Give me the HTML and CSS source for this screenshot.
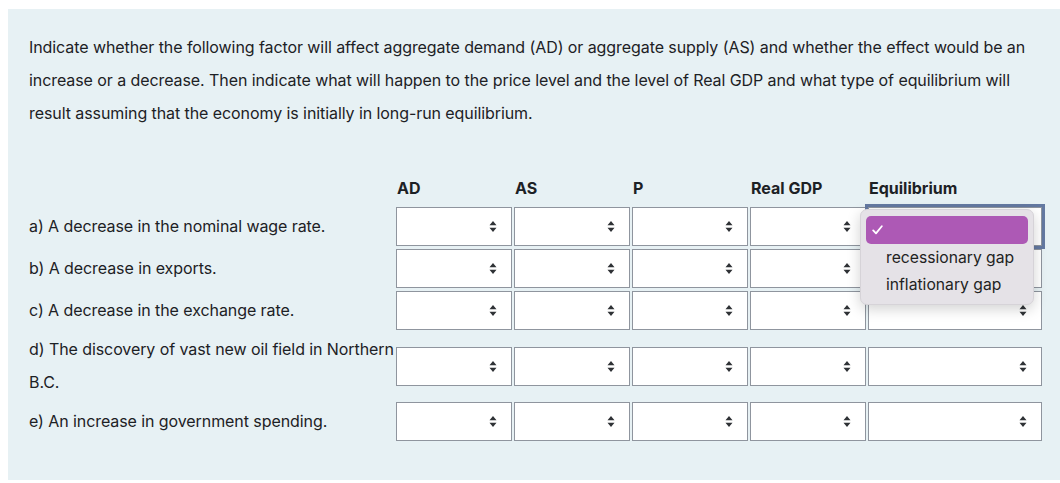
FILE: index.html
```html
<!DOCTYPE html>
<html lang="en">
<head>
<meta charset="utf-8">
<title>Question</title>
<link rel="stylesheet" href="styles.css">
</head>
<body>
<div class="panel">
  <p class="qtext">Indicate whether the following factor will affect aggregate demand (AD) or aggregate supply (AS) and whether the effect would be an increase or a decrease. Then indicate what will happen to the price level and the level of Real GDP and what type of equilibrium will result assuming that the economy is initially in long-run equilibrium.</p>
  <table class="grid">
    <thead>
      <tr>
        <th class="lab"></th>
        <th>AD</th>
        <th>AS</th>
        <th>P</th>
        <th>Real GDP</th>
        <th>Equilibrium</th>
      </tr>
    </thead>
    <tbody>
      <tr>
        <td class="lab">a) A decrease in the nominal wage rate.</td>
        <td><div class="sel"><svg class="arr" width="8" height="11" viewBox="0 0 8 11"><path d="M4 0L7.5 4.3H0.5Z M0.5 6.7H7.5L4 11Z"/></svg></div></td>
        <td><div class="sel"><svg class="arr" width="8" height="11" viewBox="0 0 8 11"><path d="M4 0L7.5 4.3H0.5Z M0.5 6.7H7.5L4 11Z"/></svg></div></td>
        <td><div class="sel"><svg class="arr" width="8" height="11" viewBox="0 0 8 11"><path d="M4 0L7.5 4.3H0.5Z M0.5 6.7H7.5L4 11Z"/></svg></div></td>
        <td><div class="sel"><svg class="arr" width="8" height="11" viewBox="0 0 8 11"><path d="M4 0L7.5 4.3H0.5Z M0.5 6.7H7.5L4 11Z"/></svg></div></td>
        <td class="eqcell">
          <div class="sel wide focus"><svg class="arr" width="8" height="11" viewBox="0 0 8 11"><path d="M4 0L7.5 4.3H0.5Z M0.5 6.7H7.5L4 11Z"/></svg></div>
          <div class="menu">
            <div class="opt on"><svg class="check" width="11" height="10" viewBox="0 0 11 10"><path d="M1.2 5.4L4 8.4L9.8 1.2" fill="none" stroke="#ffffff" stroke-width="1.8" stroke-linecap="round" stroke-linejoin="round"/></svg></div>
            <div class="opt">recessionary gap</div>
            <div class="opt">inflationary gap</div>
          </div>
        </td>
      </tr>
      <tr>
        <td class="lab">b) A decrease in exports.</td>
        <td><div class="sel"><svg class="arr" width="8" height="11" viewBox="0 0 8 11"><path d="M4 0L7.5 4.3H0.5Z M0.5 6.7H7.5L4 11Z"/></svg></div></td>
        <td><div class="sel"><svg class="arr" width="8" height="11" viewBox="0 0 8 11"><path d="M4 0L7.5 4.3H0.5Z M0.5 6.7H7.5L4 11Z"/></svg></div></td>
        <td><div class="sel"><svg class="arr" width="8" height="11" viewBox="0 0 8 11"><path d="M4 0L7.5 4.3H0.5Z M0.5 6.7H7.5L4 11Z"/></svg></div></td>
        <td><div class="sel"><svg class="arr" width="8" height="11" viewBox="0 0 8 11"><path d="M4 0L7.5 4.3H0.5Z M0.5 6.7H7.5L4 11Z"/></svg></div></td>
        <td><div class="sel wide"><svg class="arr" width="8" height="11" viewBox="0 0 8 11"><path d="M4 0L7.5 4.3H0.5Z M0.5 6.7H7.5L4 11Z"/></svg></div></td>
      </tr>
      <tr>
        <td class="lab">c) A decrease in the exchange rate.</td>
        <td><div class="sel"><svg class="arr" width="8" height="11" viewBox="0 0 8 11"><path d="M4 0L7.5 4.3H0.5Z M0.5 6.7H7.5L4 11Z"/></svg></div></td>
        <td><div class="sel"><svg class="arr" width="8" height="11" viewBox="0 0 8 11"><path d="M4 0L7.5 4.3H0.5Z M0.5 6.7H7.5L4 11Z"/></svg></div></td>
        <td><div class="sel"><svg class="arr" width="8" height="11" viewBox="0 0 8 11"><path d="M4 0L7.5 4.3H0.5Z M0.5 6.7H7.5L4 11Z"/></svg></div></td>
        <td><div class="sel"><svg class="arr" width="8" height="11" viewBox="0 0 8 11"><path d="M4 0L7.5 4.3H0.5Z M0.5 6.7H7.5L4 11Z"/></svg></div></td>
        <td><div class="sel wide"><svg class="arr" width="8" height="11" viewBox="0 0 8 11"><path d="M4 0L7.5 4.3H0.5Z M0.5 6.7H7.5L4 11Z"/></svg></div></td>
      </tr>
      <tr>
        <td class="lab">d) The discovery of vast new oil field in Northern<br>B.C.</td>
        <td><div class="sel"><svg class="arr" width="8" height="11" viewBox="0 0 8 11"><path d="M4 0L7.5 4.3H0.5Z M0.5 6.7H7.5L4 11Z"/></svg></div></td>
        <td><div class="sel"><svg class="arr" width="8" height="11" viewBox="0 0 8 11"><path d="M4 0L7.5 4.3H0.5Z M0.5 6.7H7.5L4 11Z"/></svg></div></td>
        <td><div class="sel"><svg class="arr" width="8" height="11" viewBox="0 0 8 11"><path d="M4 0L7.5 4.3H0.5Z M0.5 6.7H7.5L4 11Z"/></svg></div></td>
        <td><div class="sel"><svg class="arr" width="8" height="11" viewBox="0 0 8 11"><path d="M4 0L7.5 4.3H0.5Z M0.5 6.7H7.5L4 11Z"/></svg></div></td>
        <td><div class="sel wide"><svg class="arr" width="8" height="11" viewBox="0 0 8 11"><path d="M4 0L7.5 4.3H0.5Z M0.5 6.7H7.5L4 11Z"/></svg></div></td>
      </tr>
      <tr>
        <td class="lab">e) An increase in government spending.</td>
        <td><div class="sel"><svg class="arr" width="8" height="11" viewBox="0 0 8 11"><path d="M4 0L7.5 4.3H0.5Z M0.5 6.7H7.5L4 11Z"/></svg></div></td>
        <td><div class="sel"><svg class="arr" width="8" height="11" viewBox="0 0 8 11"><path d="M4 0L7.5 4.3H0.5Z M0.5 6.7H7.5L4 11Z"/></svg></div></td>
        <td><div class="sel"><svg class="arr" width="8" height="11" viewBox="0 0 8 11"><path d="M4 0L7.5 4.3H0.5Z M0.5 6.7H7.5L4 11Z"/></svg></div></td>
        <td><div class="sel"><svg class="arr" width="8" height="11" viewBox="0 0 8 11"><path d="M4 0L7.5 4.3H0.5Z M0.5 6.7H7.5L4 11Z"/></svg></div></td>
        <td><div class="sel wide"><svg class="arr" width="8" height="11" viewBox="0 0 8 11"><path d="M4 0L7.5 4.3H0.5Z M0.5 6.7H7.5L4 11Z"/></svg></div></td>
      </tr>
    </tbody>
  </table>
</div>
</body>
</html>
```

FILE: styles.css
```css
html, body {
  margin: 0;
  padding: 0;
  background: #ffffff;
}

body {
  font-family: Inter, "Noto Sans", "Liberation Sans", sans-serif;
  font-size: 16px;
  color: #1d2125;
  overflow: hidden;
}

.panel {
  margin: 9px 0 0 8px;
  height: 471px;
  box-sizing: border-box;
  padding: 22px 0 0 21px;
  background: #e7f1f4;
}

.qtext {
  margin: 0 0 42px 0;
  max-width: 1008px;
  line-height: 33px;
  letter-spacing: -0.08px;
}

.grid {
  border-collapse: separate;
  border-spacing: 0;
}

.grid th {
  text-align: left;
  font-weight: 700;
  line-height: 33px;
  padding: 0 2px 0.5px 2px;
  vertical-align: middle;
  white-space: nowrap;
}

.grid td {
  padding: 1.5px 1px;
  vertical-align: middle;
}

.grid .lab {
  width: 366px;
  min-width: 366px;
  box-sizing: border-box;
  padding: 1.5px 0;
  line-height: 33px;
  white-space: nowrap;
  letter-spacing: -0.08px;
}

.sel {
  width: 116px;
  height: 39px;
  box-sizing: border-box;
  background: #ffffff;
  border: 1px solid #8f959e;
  display: flex;
  align-items: center;
  justify-content: flex-end;
  padding-right: 14px;
}

.sel.wide {
  width: 174px;
}

.sel.focus {
  box-shadow: 0 0 0 3px #6479a1;
}

.arr {
  fill: #2f3236;
  display: block;
}

.eqcell {
  position: relative;
}

.menu {
  position: absolute;
  left: -7px;
  top: 3px;
  width: 174px;
  box-sizing: border-box;
  padding: 6px 5px;
  background: #e5e2e7;
  border-radius: 7px;
  border: 1px solid #d6d3d8;
  box-shadow: 0 4px 14px rgba(0, 0, 0, 0.18);
  z-index: 2;
}

.opt {
  height: 27px;
  line-height: 27px;
  padding-left: 20px;
  font-size: 15.7px;
  color: #222222;
  border-radius: 5px;
  white-space: nowrap;
}

.opt.on {
  height: 28px;
  background: #ad59b5;
  padding-left: 6px;
  display: flex;
  align-items: center;
}

.check {
  display: block;
}
```
